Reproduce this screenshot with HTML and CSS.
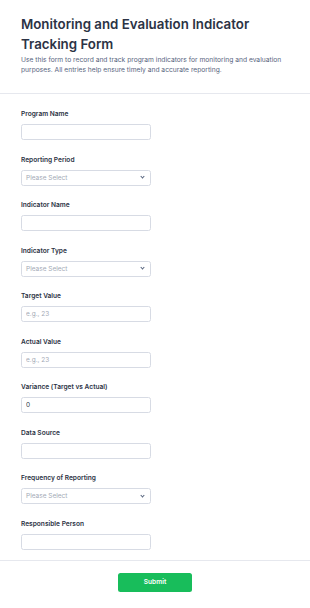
FILE: index.html
```html
<!DOCTYPE html>
<html lang="en">
<head>
    <meta charset="UTF-8">
    <meta name="viewport" content="width=device-width, initial-scale=1.0">
    <title>Monitoring and Evaluation Indicator Tracking Form</title>
    <link rel="stylesheet" href="styles.css">
</head>
<body>
    <div class="header">
        <h1 class="title">Monitoring and Evaluation Indicator Tracking Form</h1>
        <p class="subtitle">Use this form to record and track program indicators for monitoring and evaluation purposes. All entries help ensure timely and accurate reporting.</p>
    </div>

    <form class="form">
        <div class="field">
            <label class="label">Program Name</label>
            <input class="input" type="text">
        </div>
        <div class="field">
            <label class="label">Reporting Period</label>
            <div class="select">Please Select<span class="chevron"></span></div>
        </div>
        <div class="field">
            <label class="label">Indicator Name</label>
            <input class="input" type="text">
        </div>
        <div class="field">
            <label class="label">Indicator Type</label>
            <div class="select">Please Select<span class="chevron"></span></div>
        </div>
        <div class="field">
            <label class="label">Target Value</label>
            <input class="input" type="text" placeholder="e.g., 23">
        </div>
        <div class="field">
            <label class="label">Actual Value</label>
            <input class="input" type="text" placeholder="e.g., 23">
        </div>
        <div class="field">
            <label class="label">Variance (Target vs Actual)</label>
            <input class="input" type="text" value="0">
        </div>
        <div class="field">
            <label class="label">Data Source</label>
            <input class="input" type="text">
        </div>
        <div class="field">
            <label class="label">Frequency of Reporting</label>
            <div class="select">Please Select<span class="chevron"></span></div>
        </div>
        <div class="field last">
            <label class="label">Responsible Person</label>
            <input class="input" type="text">
        </div>
    </form>

    <div class="footer">
        <button class="submit" type="button">Submit</button>
    </div>
</body>
</html>
```

FILE: styles.css
```css
body {
    margin: 0;
    padding: 0;
    font-family: Inter, 'Noto Sans', sans-serif;
    background-color: #ffffff;
    color: #2c3345;
}

.header {
    padding: 15px 21px 18px 21px;
    border-bottom: 1px solid #e6e8ee;
}

.title {
    margin: 0;
    font-size: 13.3px;
    line-height: 19.5px;
    font-weight: 600;
    color: #2c3345;
}

.subtitle {
    margin: 1px 0 0 0;
    font-size: 6.7px;
    line-height: 10px;
    color: #57647e;
}

.form {
    padding: 15px 21px 0 21px;
}

.field {
    display: flex;
    flex-direction: column;
    margin-bottom: 14.5px;
}

.field.last {
    margin-bottom: 10px;
}

.label {
    font-size: 6.6px;
    line-height: 10px;
    font-weight: 600;
    color: #2c3345;
    margin-bottom: 5px;
}

.input,
.select {
    box-sizing: border-box;
    width: 130px;
    height: 16px;
    border: 1px solid #d7dbe4;
    border-radius: 2.5px;
    background-color: #ffffff;
    font-family: Inter, 'Noto Sans', sans-serif;
    font-size: 6.5px;
    color: #2c3345;
    padding: 0 4px;
    margin: 0;
    outline: none;
}

.input::placeholder {
    color: #a3a9b5;
}

.select {
    display: flex;
    align-items: center;
    justify-content: space-between;
    color: #a3a9b5;
}

.chevron {
    width: 2px;
    height: 2px;
    border-right: 1px solid #57647e;
    border-bottom: 1px solid #57647e;
    transform: rotate(45deg);
    margin: 0 2px 2px 0;
}

.footer {
    border-top: 1px solid #e6e8ee;
    display: flex;
    justify-content: center;
    padding: 12px 0 30px 0;
}

.submit {
    width: 74px;
    height: 19px;
    border: none;
    border-radius: 2.5px;
    background-color: #18bd5b;
    color: #ffffff;
    font-family: Inter, 'Noto Sans', sans-serif;
    font-size: 6.6px;
    font-weight: 600;
}
```
